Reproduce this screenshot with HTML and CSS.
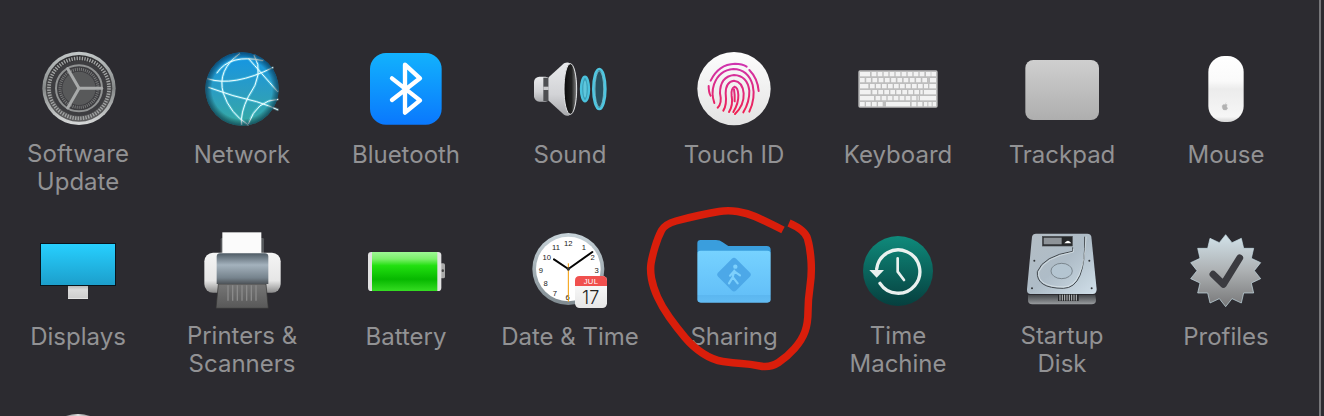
FILE: index.html
```html
<!DOCTYPE html>
<html lang="en">
<head>
<meta charset="utf-8">
<title>System Preferences</title>
<link rel="stylesheet" href="styles.css">
</head>
<body>
<div class="page">
  <main class="grid">
    <div class="pref">
      <svg class="icon" viewBox="120 60 228 228">
        <defs>
          <linearGradient id="gearRim" x1="0" y1="0" x2="0" y2="1"><stop offset="0" stop-color="#c4c9c9"/><stop offset=".5" stop-color="#858888"/><stop offset="1" stop-color="#d8dada"/></linearGradient>
          <linearGradient id="gearFace" x1="0" y1="0" x2="0" y2="1"><stop offset="0" stop-color="#2f2f31"/><stop offset="1" stop-color="#5e5e5f"/></linearGradient>
        </defs>
        <circle cx="237" cy="175" r="110" fill="url(#gearRim)"/>
        <circle cx="237" cy="175" r="100" fill="url(#gearFace)"/>
        <circle cx="237" cy="175" r="90" fill="none" stroke="#a2a4a4" stroke-width="11" stroke-dasharray="4 3.85"/>
        <circle cx="237" cy="175" r="83" fill="#3d3d40"/>
        <circle cx="237" cy="175" r="69" fill="none" stroke="#919393" stroke-width="6"/>
        <circle cx="237" cy="175" r="57" fill="none" stroke="#787979" stroke-width="9" stroke-dasharray="3 3.2"/>
        <circle cx="237" cy="175" r="50" fill="#58595a"/>
        <g stroke="#a8aaaa" stroke-width="9" stroke-linecap="round">
          <line x1="237" y1="175" x2="305" y2="175"/>
          <line x1="237" y1="175" x2="203" y2="116"/>
          <line x1="237" y1="175" x2="203" y2="234"/>
        </g>
      </svg>
      <div class="label two">Software<br>Update</div>
    </div>
    <div class="pref">
      <svg class="icon" viewBox="612 60 228 228">
        <defs>
          <linearGradient id="netFill" x1="0" y1="0" x2="0" y2="1"><stop offset="0" stop-color="#1295e6"/><stop offset=".5" stop-color="#2a9cc4"/><stop offset="1" stop-color="#36aaa2"/></linearGradient>
          <radialGradient id="netEdge" cx=".5" cy=".5" r=".5"><stop offset=".82" stop-color="#000" stop-opacity="0"/><stop offset="1" stop-color="#00203a" stop-opacity=".6"/></radialGradient>
          <g id="netLines">
            <path d="M622 146Q700 172 820 112"/>
            <path d="M720 70Q650 120 670 190Q690 250 745 285"/>
            <path d="M762 75Q795 130 745 200Q720 250 725 285"/>
            <path d="M625 172Q700 200 770 215Q810 228 835 240"/>
            <path d="M835 208Q770 210 745 282"/>
            <path d="M834 186Q780 125 745 85"/>
            <path d="M650 130Q690 70 790 92"/>
          </g>
        </defs>
        <circle cx="726" cy="177" r="110" fill="url(#netFill)"/>
        <use href="#netLines" fill="none" stroke="#8ff0ff" stroke-opacity=".35" stroke-width="8"/>
        <use href="#netLines" fill="none" stroke="#f0feff" stroke-width="3"/>
        <circle cx="726" cy="177" r="110" fill="url(#netEdge)"/>
      </svg>
      <div class="label">Network</div>
    </div>
    <div class="pref">
      <svg class="icon" viewBox="1104 60 228 228">
        <defs><linearGradient id="btFill" x1="0" y1="0" x2="0" y2="1"><stop offset="0" stop-color="#12b2fd"/><stop offset="1" stop-color="#0a78fd"/></linearGradient></defs>
        <rect x="1110" y="69" width="215" height="215" rx="48" fill="url(#btFill)"/>
        <path d="M1176 145L1260 211L1215 248V104L1260 145L1176 210" fill="none" stroke="#fff" stroke-width="13" stroke-linecap="round" stroke-linejoin="round"/>
      </svg>
      <div class="label">Bluetooth</div>
    </div>
    <div class="pref">
      <svg class="icon" viewBox="216 60 228 228">
        <defs>
          <linearGradient id="spkBody" x1="0" y1="0" x2="0" y2="1"><stop offset="0" stop-color="#e9eaec"/><stop offset=".6" stop-color="#d2d3d6"/><stop offset="1" stop-color="#a9aaad"/></linearGradient>
          <linearGradient id="spkCone" x1="0" y1="0" x2="1" y2="0"><stop offset="0" stop-color="#0c0c0c"/><stop offset=".6" stop-color="#222"/><stop offset="1" stop-color="#888"/></linearGradient>
        </defs>
        <rect x="222" y="140" width="50" height="75" rx="16" fill="url(#spkBody)"/>
        <rect x="250" y="143" width="16" height="70" fill="#4e4f52"/>
        <rect x="250" y="170" width="16" height="10" fill="#c9cacc"/>
        <path d="M266 142L312 100Q328 92 338 108L338 245Q326 264 312 254L266 212Z" fill="url(#spkBody)"/>
        <ellipse cx="331" cy="177" rx="19" ry="76" fill="url(#spkCone)" stroke="#e4e5e7" stroke-width="3"/>
        <ellipse cx="375" cy="177" rx="12" ry="37" fill="#3b9db5" stroke="#4cc2dd" stroke-width="7"/>
        <ellipse cx="375" cy="177" rx="5" ry="26" fill="#5fc6dc"/>
        <ellipse cx="418" cy="177" rx="18" ry="60" fill="#28505e" stroke="#4fc6e0" stroke-width="8"/>
        <ellipse cx="418" cy="177" rx="13" ry="54" fill="none" stroke="#8fe3f3" stroke-opacity=".6" stroke-width="3"/>
      </svg>
      <div class="label">Sound</div>
    </div>
    <div class="pref">
      <svg class="icon" viewBox="708 60 228 228">
        <defs>
          <linearGradient id="tidFill" x1="0" y1="0" x2="0" y2="1"><stop offset="0" stop-color="#fdfdfd"/><stop offset="1" stop-color="#e3e3e3"/></linearGradient>
          <linearGradient id="tidInk" gradientUnits="userSpaceOnUse" x1="820" y1="100" x2="820" y2="255"><stop offset="0" stop-color="#cf35b0"/><stop offset="1" stop-color="#f0204f"/></linearGradient>
        </defs>
        <circle cx="822" cy="176" r="110" fill="url(#tidFill)"/>
        <g fill="none" stroke="url(#tidInk)" stroke-width="6" stroke-linecap="round">
          <path d="M752 152Q775 103 825 101Q847 101 860 110"/>
          <path d="M868 120Q893 145 896 183"/>
          <path d="M746 168Q746 188 752 197"/>
          <path d="M763 219Q753 190 762 163Q778 120 820 117Q864 118 878 165Q887 205 868 245"/>
          <path d="M773 233Q787 220 780 190Q780 140 822 135Q862 137 868 182Q869 215 850 247"/>
          <path d="M790 242Q801 225 797 190Q797 155 822 152Q848 155 851 190Q853 225 825 252"/>
          <path d="M807 246Q820 225 815 198Q812 175 824 170Q834 172 835 195Q836 220 820 246"/>
          <path d="M822 178Q825 195 824 214"/>
        </g>
      </svg>
      <div class="label">Touch ID</div>
    </div>
    <div class="pref">
      <svg class="icon" viewBox="30 -30 228 228">
        <rect x="25" y="31" width="238" height="112" rx="5" fill="#bdbdbd"/>
        <g fill="none" stroke="#f2f2f2" stroke-width="13">
          <path d="M30 42.5H60"/>
          <path d="M65 42.5H224" stroke-dasharray="14 4"/>
          <path d="M228 42.5H258" stroke-dasharray="14 2"/>
          <path d="M30 60.5H236" stroke-dasharray="14 4.7"/>
          <path d="M240 60.5H258"/>
          <path d="M30 78.5H55"/>
          <path d="M60 78.5H234" stroke-dasharray="14 4"/>
          <path d="M238 78.5H258"/>
          <path d="M30 96.5H62"/>
          <path d="M67 96.5H218" stroke-dasharray="14 4"/>
          <path d="M222 96.5H258"/>
          <path d="M30 114.5H72"/>
          <path d="M77 114.5H206" stroke-dasharray="14 4"/>
          <path d="M210 114.5H258"/>
          <path d="M30 132.5H102" stroke-dasharray="14 4"/>
          <path d="M108 132.5H180"/>
          <path d="M185 132.5H218" stroke-dasharray="14 4"/>
          <path d="M222 132.5H258" stroke-dasharray="10 3"/>
        </g>
      </svg>
      <div class="label">Keyboard</div>
    </div>
    <div class="pref">
      <svg class="icon" viewBox="312 60 228 228">
        <defs><linearGradient id="padFill" x1="0" y1="0" x2="0" y2="1"><stop offset="0" stop-color="#cfcfcf"/><stop offset="1" stop-color="#aeaeae"/></linearGradient></defs>
        <rect x="316" y="90" width="221" height="180" rx="24" fill="url(#padFill)"/>
      </svg>
      <div class="label">Trackpad</div>
    </div>
    <div class="pref">
      <svg class="icon" viewBox="804 60 228 228">
        <defs><linearGradient id="mouseFill" x1="0" y1="0" x2="0" y2="1"><stop offset="0" stop-color="#fff"/><stop offset=".38" stop-color="#fafafa"/><stop offset=".5" stop-color="#ececec"/><stop offset=".92" stop-color="#f6f6f6"/><stop offset="1" stop-color="#d4d4d4"/></linearGradient></defs>
        <rect x="865" y="78" width="106" height="198" rx="48" fill="url(#mouseFill)"/>
        <path d="M915 221Q918 219 919 218M915 224C909 221 905 227 907 233C909 240 912 241 915 239C918 241 921 240 923 234C919 232 919 226 922 225C920 222 917 223 915 224Z" fill="#b2b2b2" stroke="#b2b2b2" stroke-width="1"/>
      </svg>
      <div class="label">Mouse</div>
    </div>

    <div class="pref">
      <svg class="icon" viewBox="120 66 228 228">
        <defs>
          <linearGradient id="dispFill" x1="0" y1="0" x2="0" y2="1"><stop offset="0" stop-color="#27d0ff"/><stop offset="1" stop-color="#1c9ecb"/></linearGradient>
          <linearGradient id="dispStand" x1="0" y1="0" x2="0" y2="1"><stop offset="0" stop-color="#b9b9b9"/><stop offset=".3" stop-color="#dcdcdc"/><stop offset=".9" stop-color="#cfcfcf"/><stop offset="1" stop-color="#f0f0f0"/></linearGradient>
        </defs>
        <rect x="204" y="228" width="60" height="39" fill="url(#dispStand)"/>
        <rect x="121.500" y="100.500" width="225" height="126" fill="url(#dispFill)" stroke="#07141c" stroke-width="3"/>
      </svg>
      <div class="label">Displays</div>
    </div>
    <div class="pref">
      <svg class="icon" viewBox="612 66 228 228">
        <defs>
          <linearGradient id="prnSide" x1="0" y1="0" x2="0" y2="1"><stop offset="0" stop-color="#f5f5f5"/><stop offset=".7" stop-color="#e6e6e6"/><stop offset="1" stop-color="#8c8c8c"/></linearGradient>
          <linearGradient id="prnBody" x1="0" y1="0" x2="0" y2="1"><stop offset="0" stop-color="#4f5c66"/><stop offset=".38" stop-color="#a4b2bd"/><stop offset=".8" stop-color="#76838d"/><stop offset="1" stop-color="#4d5257"/></linearGradient>
          <linearGradient id="prnTray" x1="0" y1="0" x2="0" y2="1"><stop offset="0" stop-color="#767676"/><stop offset="1" stop-color="#585858"/></linearGradient>
        </defs>
        <rect x="662" y="84" width="130" height="60" rx="4" fill="#55585b"/>
        <rect x="667" y="67" width="117" height="64" fill="#fbfbfb"/>
        <rect x="613" y="128" width="229" height="120" rx="26" fill="url(#prnSide)"/>
        <path d="M655 222H798L805 295H648Z" fill="url(#prnTray)" stroke="#333" stroke-width="2"/>
        <path d="M684 226V272M698 226V272M712 226V272M726 226V272M740 226V272M754 226V272M768 226V272" stroke="#8a8a8a" stroke-width="4"/>
        <path d="M650 140Q650 130 660 130H795Q805 130 805 140V222H650Z" fill="url(#prnBody)"/>
      </svg>
      <div class="label two">Printers &amp;<br>Scanners</div>
    </div>
    <div class="pref">
      <svg class="icon" viewBox="1104 66 228 228">
        <defs><linearGradient id="batFill" x1="0" y1="0" x2="0" y2="1"><stop offset="0" stop-color="#9ef895"/><stop offset=".18" stop-color="#7bf06a"/><stop offset=".35" stop-color="#22e010"/><stop offset=".7" stop-color="#07b800"/><stop offset="1" stop-color="#35dd22"/></linearGradient></defs>
        <rect x="1320" y="160" width="15" height="45" rx="5" fill="#a9a9a9"/>
        <circle cx="1328" cy="182" r="4" fill="#444"/>
        <rect x="1104" y="126" width="220" height="117" rx="10" fill="#e2e2e2"/>
        <rect x="1116" y="126" width="196" height="117" fill="url(#batFill)"/>
      </svg>
      <div class="label">Battery</div>
    </div>
    <div class="pref">
      <svg class="icon" viewBox="156 96 228 228">
        <defs>
          <linearGradient id="clkRim" x1="0" y1="0" x2="0" y2="1"><stop offset="0" stop-color="#c8d4da"/><stop offset="1" stop-color="#7f8a90"/></linearGradient>
          <linearGradient id="calBody" x1="0" y1="0" x2="0" y2="1"><stop offset="0" stop-color="#fff"/><stop offset="1" stop-color="#e6e6e6"/></linearGradient>
        </defs>
        <circle cx="265" cy="207" r="108" fill="url(#clkRim)"/>
        <circle cx="265" cy="207" r="97" fill="#fff"/>
        <g class="clock-num">
          <text x="265" y="130">12</text><text x="312" y="142">1</text><text x="338" y="172">2</text><text x="350" y="210">3</text>
          <text x="263" y="292">6</text><text x="225" y="279">7</text><text x="197" y="250">8</text><text x="183" y="210">9</text>
          <text x="200" y="172">10</text><text x="228" y="142">11</text>
        </g>
        <path d="M222 178L265 207L337 156" fill="none" stroke="#050505" stroke-width="6" stroke-linecap="round" stroke-linejoin="round"/>
        <path d="M265 190V305" stroke="#f49a00" stroke-width="3"/>
        <circle cx="265" cy="207" r="5" fill="#333"/>
        <rect x="285" y="228" width="96" height="96" rx="14" fill="url(#calBody)"/>
        <path d="M285 258V242Q285 228 299 228H367Q381 228 381 242V258Z" fill="#f0504e"/>
        <text class="cal-month" x="333" y="244">JUL</text>
        <text class="cal-day" x="332" y="292">17</text>
      </svg>
      <div class="label">Date &amp; Time</div>
    </div>
    <div class="pref">
      <svg class="icon" viewBox="648 96 228 228">
        <defs><linearGradient id="fldFill" x1="0" y1="0" x2="0" y2="1"><stop offset="0" stop-color="#76d2ff"/><stop offset=".85" stop-color="#64c0f8"/><stop offset=".86" stop-color="#5cb7f0"/><stop offset="1" stop-color="#62bcf4"/></linearGradient></defs>
        <path d="M652 160V130Q652 120 662 120H708Q720 120 728 127L745 138H860Q872 138 872 150V160Z" fill="#3a9edd"/>
        <rect x="652" y="152" width="220" height="156" rx="10" fill="url(#fldFill)"/>
        <rect x="724" y="186" width="76" height="76" rx="9" fill="#4ca8e8" transform="rotate(45 762 224)"/>
        <circle cx="766" cy="200" r="6.500" fill="#7dd0fc"/>
        <path d="M763 212L758 232L747 250M759 232L773 250M762 214L750 227M763 214L780 226" fill="none" stroke="#7dd0fc" stroke-width="6.500" stroke-linecap="round" stroke-linejoin="round"/>
      </svg>
      <div class="label">Sharing</div>
    </div>
    <div class="pref">
      <svg class="icon" viewBox="90 36 228 228">
        <defs><linearGradient id="tmFill" x1="0" y1="0" x2="0" y2="1"><stop offset="0" stop-color="#0f8a7b"/><stop offset="1" stop-color="#063f3e"/></linearGradient></defs>
        <circle cx="204" cy="153" r="105" fill="url(#tmFill)"/>
        <path d="M140 147A65 65 0 1 1 150 190" fill="none" stroke="#e9f1ef" stroke-width="10" stroke-linecap="round"/>
        <path d="M118 150H162L140 173Z" fill="#e9f1ef"/>
        <path d="M203 115V155L222 180" fill="none" stroke="#e9f1ef" stroke-width="8" stroke-linecap="round" stroke-linejoin="round"/>
      </svg>
      <div class="label two">Time<br>Machine</div>
    </div>
    <div class="pref">
      <svg class="icon" viewBox="582 36 228 228">
        <defs>
          <linearGradient id="hddFill" x1="0" y1="0" x2="1" y2="1"><stop offset="0" stop-color="#b4bdc4"/><stop offset=".5" stop-color="#aebcc7"/><stop offset="1" stop-color="#d0dfe9"/></linearGradient>
          <linearGradient id="hddBase" x1="0" y1="0" x2="0" y2="1"><stop offset="0" stop-color="#44474a"/><stop offset="1" stop-color="#9a9da0"/></linearGradient>
        </defs>
        <path d="M594 225H796L798 240Q798 253 785 253H607Q594 253 594 240Z" fill="url(#hddBase)"/>
        <path d="M618 41H772Q782 41 784 50L800 208Q800 222 788 222H602Q590 222 591 208L606 50Q608 41 618 41Z" fill="url(#hddFill)"/>
        <rect x="637" y="49" width="90" height="29" fill="#26282a" stroke="#4a4d50" stroke-width="2"/>
        <rect x="641" y="53" width="54" height="20" fill="#8e9398"/>
        <path d="M703 70Q714 54 724 70Z" fill="#fff"/>
        <path d="M728 82V94Q640 108 622 155Q618 205 700 205Q768 204 764 50" fill="none" stroke="#41474c" stroke-width="3"/>
        <path d="M730 86V96Q644 112 626 156Q622 200 700 201Q762 200 768 50" fill="none" stroke="#e3ebef" stroke-width="2"/>
        <ellipse cx="695" cy="153" rx="32" ry="23" fill="#b4c5d1" stroke="#5d666d" stroke-width="2"/>
        <path d="M684 222H746V243H684Z" fill="#242628"/>
        <path d="M690 224V242M697 224V242M704 224V242M711 224V242M718 224V242M725 224V242M732 224V242M739 224V242" stroke="#c0c3c5" stroke-width="3"/>
        <g fill="#33373a"><circle cx="613" cy="122" r="3"/><circle cx="778" cy="122" r="3"/><circle cx="606" cy="205" r="3"/><circle cx="785" cy="205" r="3"/></g>
      </svg>
      <div class="label two">Startup<br>Disk</div>
    </div>
    <div class="pref">
      <svg class="icon" viewBox="1074 36 228 228">
        <defs><linearGradient id="badge" x1="0" y1="0" x2="0" y2="1"><stop offset="0" stop-color="#d2e2e9"/><stop offset=".5" stop-color="#adb1b3"/><stop offset="1" stop-color="#787879"/></linearGradient></defs>
        <path d="M1187 44L1206 68L1234 55L1241 85L1271 85L1264 115L1292 128L1273 152L1292 176L1264 189L1271 219L1241 219L1234 249L1206 236L1187 260L1168 236L1140 249L1133 219L1103 219L1110 189L1082 176L1101 152L1082 128L1110 115L1103 85L1133 85L1140 55L1168 68Z" fill="url(#badge)" stroke="#c9dfe8" stroke-width="2" stroke-linejoin="round"/>
        <path d="M1149 163L1180 193L1229 114" fill="none" stroke="#3b3b40" stroke-width="21" stroke-linecap="round" stroke-linejoin="round"/>
      </svg>
      <div class="label">Profiles</div>
    </div>

    <div class="pref">
      <svg class="icon" viewBox="0 0 76 76">
        <defs><linearGradient id="nextFill" x1="0" y1="0" x2="1" y2="0"><stop offset=".3" stop-color="#77777a"/><stop offset=".5" stop-color="#e2e2e2"/><stop offset=".7" stop-color="#77777a"/></linearGradient></defs>
        <circle cx="38" cy="38" r="38" fill="url(#nextFill)"/>
      </svg>
    </div>
  </main>
  <div class="edge"></div>
</div>
<svg class="scribble" viewBox="0 0 1324 416">
  <path d="M783 230Q763 220 755 216.500Q747 213 737.500 211.500Q728 210 719 211.500Q710 213 698.500 215.500Q687 218 676 221Q665 224 661.500 230.500Q658 237 655 247Q652 257 651 263.500Q650 270 651.500 278.500Q653 287 657.500 297Q662 307 669.500 317.500Q677 328 685 337.500Q693 347 703 353.500Q713 360 723 361.500Q733 363 741.500 363.500Q750 364 760 366Q770 368 778.500 362.500Q787 357 794.500 348.500Q802 340 805 331.500Q808 323 808 311.500Q808 300 810 286.500Q812 273 811 260Q810 247 807.500 238.500Q805 230 789 223"/>
</svg>
</body>
</html>
```
FILE: styles.css
```css
* {
  box-sizing: border-box;
}

html,
body {
  margin: 0;
  height: 100%;
  background: #2c2b30;
  overflow: hidden;
}

.page {
  display: flex;
  height: 416px;
  overflow: hidden;
}

.grid {
  flex: 1;
  min-width: 0;
  display: grid;
  grid-template-columns: repeat(8, 164px);
  grid-auto-rows: 182px;
  margin-left: -4px;
  padding-top: 50px;
}

.pref {
  display: flex;
  flex-direction: column;
  align-items: center;
}

.icon {
  display: block;
  flex: none;
  width: 76px;
  height: 76px;
  overflow: visible;
}

.label {
  margin-top: 15px;
  font-family: Inter, "Liberation Sans", sans-serif;
  font-size: 24px;
  line-height: 28px;
  color: #929294;
  text-align: center;
  white-space: nowrap;
}

.label.two {
  margin-top: 14px;
}

.edge {
  flex: none;
  width: 2px;
  margin-right: 3px;
  background: #77777a;
}

.clock-num text {
  font-family: "Liberation Sans", sans-serif;
  font-size: 23px;
  fill: #222;
  text-anchor: middle;
  dominant-baseline: central;
}

.cal-month {
  font-family: "Liberation Sans", sans-serif;
  font-size: 23px;
  letter-spacing: 1px;
  fill: #fff;
  text-anchor: middle;
  dominant-baseline: central;
}

.cal-day {
  font-family: Inter, "Liberation Sans", sans-serif;
  font-size: 54px;
  font-weight: 300;
  fill: #222;
  text-anchor: middle;
  dominant-baseline: central;
}

.scribble {
  position: absolute;
  left: 0;
  top: 0;
  width: 1324px;
  height: 416px;
  pointer-events: none;
}

.scribble path {
  fill: none;
  stroke: #d91e0b;
  stroke-width: 7.5px;
}
```
